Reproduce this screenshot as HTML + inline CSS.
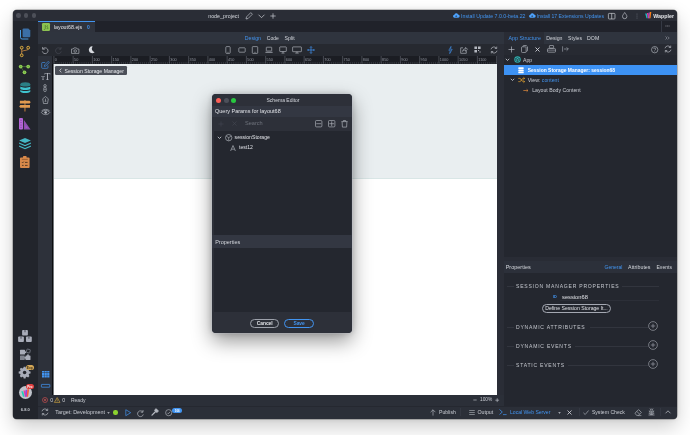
<!DOCTYPE html>
<html lang="en"><head><meta charset="utf-8"><title>Wappler - Schema Editor</title>
<style>
html,body{margin:0;padding:0;background:#fff;}
body{width:690px;height:435px;overflow:hidden;position:relative;font-family:"Liberation Sans",sans-serif;}
#win,#dlg{position:absolute;overflow:hidden;will-change:transform;}
#win{background:#22252d;border-radius:4px;}
#dlg{background:#2d3039;border-radius:4px;}
#winsh,#dlgsh{position:absolute;}
#win div,#win svg,#win span.t,#dlg div,#dlg svg,#dlg span.t{position:absolute;}
span.t{white-space:nowrap;line-height:8px;height:8px;}
svg{overflow:visible;display:block;}
</style></head>
<body>
<div id="winsh" style="left:13px;top:10px;width:664px;height:409px;border-radius:4px;box-shadow:0 0 0 .5px rgba(0,0,0,.4),0 8px 20px rgba(0,0,0,.2),0 0 5px rgba(0,0,0,.1)"></div>
<div id="win" style="left:13px;top:10px;width:664px;height:409px;">
<div style="left:0px;top:0px;width:665px;height:11px;background:#2a2d36;"></div>
<div style="left:24.5px;top:11px;width:640px;height:11px;background:#20222a;"></div>
<div style="left:24.5px;top:11px;width:57.5px;height:11px;background:#2f333d;"></div>
<div style="left:24.5px;top:11px;width:57.5px;height:0.9px;background:#4294f0;"></div>
<div style="left:24.5px;top:22px;width:640px;height:11.6px;background:#2f343e;"></div>
<div style="left:24.5px;top:33.6px;width:466px;height:12.4px;background:#262930;"></div>
<div style="left:39px;top:46px;width:445px;height:7.5px;background:#1b1d23;"></div>
<div style="left:24.5px;top:46px;width:14.5px;height:339px;background:#2d313a;"></div>
<div style="left:39px;top:53.5px;width:445px;height:331.5px;background:#0c0d10;"></div>
<div style="left:40px;top:54px;width:1px;height:331px;background:#74787c;"></div>
<div style="left:40.6px;top:53.5px;width:443.4px;height:114.6px;background:#e9eef0;"></div>
<div style="left:40.6px;top:167.9px;width:443.4px;height:0.8px;background:#d9e6e6;"></div>
<div style="left:40.6px;top:168.7px;width:443.4px;height:216.3px;background:#ffffff;"></div>
<div style="left:484px;top:33.6px;width:7px;height:351.4px;background:#2a2d36;"></div>
<div style="left:24.5px;top:385px;width:640px;height:10.7px;background:#2b2f38;"></div>
<div style="left:24.5px;top:395.7px;width:640px;height:13.3px;background:#2b2f38;"></div>
<div style="left:24.5px;top:395.5px;width:640px;height:0.5px;background:#252830;"></div>
<div style="left:0px;top:11px;width:24.5px;height:398px;background:#22252c;"></div>
<div style="left:491px;top:22px;width:174px;height:12px;background:#2f343e;"></div>
<div style="left:491px;top:22px;width:40px;height:12px;background:#292c35;"></div>
<div style="left:491px;top:34px;width:174px;height:11px;background:#272a32;"></div>
<div style="left:491px;top:44.8px;width:173.5px;height:206px;background:#24272f;"></div>
<div style="left:491px;top:55.1px;width:173.5px;height:10.1px;background:#3d92f4;"></div>
<div style="left:491px;top:247px;width:174px;height:4px;background:#292c35;"></div>
<div style="left:491px;top:250.8px;width:173.5px;height:12.3px;background:#2c303a;"></div>
<div style="left:491px;top:263.1px;width:173.5px;height:132.6px;background:#24272f;"></div>
<div style="left:3.05px;top:3.45px;width:4.5px;height:4.5px;background:#4d5059;border-radius:50%"></div>
<div style="left:10.85px;top:3.45px;width:4.5px;height:4.5px;background:#4d5059;border-radius:50%"></div>
<div style="left:18.65px;top:3.45px;width:4.5px;height:4.5px;background:#4d5059;border-radius:50%"></div>
<span class="t" style="left:195.2px;top:1.70px;color:#d4d7dd;font-size:5.33px;font-weight:400;">node_project</span>
<svg style="left:232.20px;top:1.60px;" width="8" height="8" viewBox="0 0 8 8"><path d="M1 7l.5-2.100L5.800.6l1.600 1.600L3.100 6.500z" fill="none" stroke="#c9ccd3" stroke-width=".65"/></svg>
<svg style="left:244.80px;top:3.80px;" width="7" height="4.4" viewBox="0 0 7 4.4"><path d="M.5.700L3.500 3.700 6.500.7" fill="none" stroke="#c9ccd3" stroke-width=".75"/></svg>
<svg style="left:257.40px;top:2.70px;" width="6" height="6" viewBox="0 0 6 6"><path d="M3 .3v5.4M.3 3h5.4" stroke="#c9ccd3" stroke-width=".7"/></svg>
<svg style="left:440.10px;top:3.10px;" width="6.4" height="5.2" viewBox="0 0 6.600 5.400"><path d="M1.600 4.900a1.500 1.500 0 0 1-.2-3A2 2 0 0 1 5.200 1.500 1.700 1.700 0 0 1 5.300 4.900z" fill="#4da3ff"/><path d="M3.300 2.100v1.900M2.500 3.300l.8.800.8-.8" stroke="#2a2d36" stroke-width=".55" fill="none"/></svg>
<span class="t" style="left:448px;top:1.70px;color:#4294f0;font-size:5.26px;font-weight:400;">Install Update 7.0.0-beta.22</span>
<svg style="left:515.50px;top:3.10px;" width="6.4" height="5.2" viewBox="0 0 6.600 5.400"><path d="M1.600 4.900a1.500 1.500 0 0 1-.2-3A2 2 0 0 1 5.200 1.500 1.700 1.700 0 0 1 5.300 4.900z" fill="#4da3ff"/><path d="M3.300 2.100v1.900M2.500 3.300l.8.800.8-.8" stroke="#2a2d36" stroke-width=".55" fill="none"/></svg>
<span class="t" style="left:523.7px;top:1.70px;color:#4294f0;font-size:5.11px;font-weight:400;">Install 17 Extensions Updates</span>
<svg style="left:594.90px;top:2.50px;" width="7.4" height="6.4" viewBox="0 0 7.4 6.4"><rect x=".4" y=".4" width="6.6" height="5.6" rx=".8" fill="none" stroke="#c9ccd3" stroke-width=".7"/><path d="M3.7.4v5.6" stroke="#c9ccd3" stroke-width=".7"/></svg>
<svg style="left:608.80px;top:2.20px;" width="5.4" height="7" viewBox="0 0 5.4 7"><path d="M2.7.5C3.6 2 4.9 3.1 4.9 4.5a2.2 2.2 0 0 1-4.4 0C.5 3.1 1.8 2 2.7.5z" fill="none" stroke="#c9ccd3" stroke-width=".65"/></svg>
<svg style="left:623.00px;top:2.70px;" width="2" height="6" viewBox="0 0 2 6"><circle cx="1" cy="1" r=".5" fill="#6a6e78"/><circle cx="1" cy="3" r=".5" fill="#6a6e78"/><circle cx="1" cy="5" r=".5" fill="#6a6e78"/></svg>
<svg style="left:632.40px;top:2.30px;" width="6.4" height="6.4" viewBox="0 0 6.4 6.4"><path d="M.2 1.6h1.5l1 4.6h-1.2z" fill="#19c1c8"/><path d="M1.9 1h1.5l.9 5.2H2.9z" fill="#e83e8c"/><path d="M3.6.4h1.3L4.6 6.2H3.3z" fill="#8d46e7"/><path d="M4.9.1h1.4L5.5 6.2H4.3z" fill="#fd7e14"/></svg>
<span class="t" style="left:640.3px;top:1.70px;color:#e4e6ea;font-size:5.3px;font-weight:700;">Wappler</span>
<div style="left:29px;top:13px;width:8px;height:8px;background:#8cc152;border-radius:1.2px"></div>
<svg style="left:29.00px;top:13.00px;" width="8" height="8" viewBox="0 0 8 8"><path d="M3.300 2v3.400c0 .9-.5 1.300-1.400 1.100M6 2.800c-1.100-.4-1.800 1.100-.5 1.500 1.200.4.700 1.900-.8 1.300" fill="none" stroke="#4f7d2a" stroke-width=".8"/></svg>
<span class="t" style="left:40.9px;top:13.10px;color:#e0e2e7;font-size:5.3px;font-weight:400;">layout68.ejs</span>
<span class="t" style="left:75.3px;top:13.10px;color:#4294f0;font-size:5px;font-weight:700;transform:translateX(-50%);">0</span>
<div style="left:647.5px;top:11px;width:0.5px;height:11px;background:#353944;"></div>
<svg style="left:652.20px;top:15.30px;" width="5" height="2" viewBox="0 0 5 2"><path d="M.3 1h4.4" stroke="#b0b4bc" stroke-width=".55" stroke-dasharray="1.2 .4"/></svg>
<span class="t" style="left:231.8px;top:23.90px;color:#4294f0;font-size:5.2px;font-weight:400;">Design</span>
<span class="t" style="left:253.8px;top:23.90px;color:#d4d7dd;font-size:5.0px;font-weight:400;">Code</span>
<span class="t" style="left:271.5px;top:23.90px;color:#d4d7dd;font-size:5.2px;font-weight:400;">Split</span>
<svg style="left:28.20px;top:36.00px;" width="7.6" height="7.6" viewBox="0 0 7.6 7.6"><path d="M1.6 1v2.2h2.2" fill="none" stroke="#b4b8c0" stroke-width=".7"/><path d="M1.8 3A2.9 2.9 0 1 1 1.3 5.400" fill="none" stroke="#b4b8c0" stroke-width=".7"/></svg>
<svg style="left:41.90px;top:36.00px;" width="7.6" height="7.6" viewBox="0 0 7.6 7.6"><path d="M6 1v2.2H3.800" fill="none" stroke="#454852" stroke-width=".7"/><path d="M5.800 3A2.900 2.900 0 1 0 6.300 5.400" fill="none" stroke="#454852" stroke-width=".7"/></svg>
<svg style="left:57.70px;top:36.50px;" width="8.4" height="7" viewBox="0 0 8.4 7"><path d="M.5 2h1.700l.7-1.100h2.600l.7 1.100h1.700v4.400H.5z" fill="none" stroke="#b4b8c0" stroke-width=".65"/><circle cx="4.200" cy="4" r="1.300" fill="none" stroke="#b4b8c0" stroke-width=".65"/></svg>
<svg style="left:75.10px;top:36.10px;" width="7" height="7.4" viewBox="0 0 7 7.4"><path d="M4.600.4A3.400 3.400 0 1 0 6.600 6.200 3.600 3.600 0 0 1 4.600.4z" fill="#d8dbe1"/></svg>
<svg style="left:211.40px;top:35.80px;" width="8" height="8" viewBox="0 0 8 8"><rect x="1.800" y=".6" width="4.400" height="6.800" rx=".9" fill="none" stroke="#b4b8c0" stroke-width=".65"/><path d="M3.400 6.300h1.200" stroke="#b4b8c0" stroke-width=".5"/></svg>
<svg style="left:224.50px;top:35.80px;" width="8" height="8" viewBox="0 0 8 8"><rect x=".8" y="1.800" width="6.400" height="4.400" rx=".7" fill="none" stroke="#b4b8c0" stroke-width=".65"/></svg>
<svg style="left:237.70px;top:35.80px;" width="8" height="8" viewBox="0 0 8 8"><rect x="1.300" y=".6" width="5.400" height="6.800" rx=".7" fill="none" stroke="#b4b8c0" stroke-width=".65"/><path d="M3.300 6.300h1.400" stroke="#b4b8c0" stroke-width=".5"/></svg>
<svg style="left:251.60px;top:35.80px;" width="8" height="8" viewBox="0 0 8 8"><rect x="1.300" y="1.200" width="5.400" height="3.800" rx=".4" fill="none" stroke="#b4b8c0" stroke-width=".65"/><path d="M.4 6.300h7.200" stroke="#b4b8c0" stroke-width=".8"/></svg>
<svg style="left:265.80px;top:35.80px;" width="8" height="8" viewBox="0 0 8 8"><rect x=".7" y=".9" width="6.600" height="4.600" rx=".4" fill="none" stroke="#b4b8c0" stroke-width=".65"/><path d="M4 5.500v1.500M2.500 7.100h3" stroke="#b4b8c0" stroke-width=".65"/></svg>
<svg style="left:280.20px;top:35.80px;" width="8" height="8" viewBox="0 0 8 8"><rect x="-.4" y=".9" width="8.800" height="4.800" rx=".4" fill="none" stroke="#b4b8c0" stroke-width=".65"/><path d="M4 5.700v1.300M2.300 7.100h3.400" stroke="#b4b8c0" stroke-width=".65"/></svg>
<svg style="left:294.10px;top:35.80px;" width="8" height="8" viewBox="0 0 8 8"><path d="M4 .6v6.800M.6 4h6.800M3 1.600l1-1 1 1M3 6.400l1 1 1-1M1.600 3l-1 1 1 1M6.400 3l1 1-1 1" fill="none" stroke="#4294f0" stroke-width=".7"/></svg>
<svg style="left:435.20px;top:35.80px;" width="5" height="8" viewBox="0 0 5 8"><path d="M3 .4L.8 4.300h1.500L1.700 7.600 4.200 3.400H2.600z" fill="none" stroke="#4294f0" stroke-width=".6"/></svg>
<svg style="left:447.10px;top:35.90px;" width="8" height="8" viewBox="0 0 8 8"><path d="M3 1.800H.7v5.500h5.600V5" fill="none" stroke="#b4b8c0" stroke-width=".65"/><path d="M2.600 5.400c.2-1.700 1.200-2.700 3-2.700V1.400l1.900 1.900-1.900 1.900V4c-1.300 0-2.200.4-3 1.400z" fill="none" stroke="#b4b8c0" stroke-width=".65"/></svg>
<svg style="left:461.00px;top:36.10px;" width="7" height="7" viewBox="0 0 7 7"><path d="M.4.4h2.600v2.600H.4zM4 .4h2.600v2.600H4zM.4 4h2.600v2.600H.4zM4 4h1.100v1.100H4zM5.500 5.500h1.100v1.100H5.500z" fill="#b4b8c0"/></svg>
<svg style="left:477.20px;top:35.80px;" width="8" height="8" viewBox="0 0 8 8"><path d="M1 3.300A3 3 0 0 1 6.400 2.200M7 4.700A3 3 0 0 1 1.600 5.800" fill="none" stroke="#b4b8c0" stroke-width=".7"/><path d="M6.700.6v1.900H4.800M1.300 7.400V5.500h1.900" fill="none" stroke="#b4b8c0" stroke-width=".7"/></svg>
<svg style="left:39px;top:46px;overflow:hidden" width="445" height="7.500" viewBox="0 0 445 7.500" font-family="Liberation Sans, sans-serif"><path d="M1.90 0v7.5" stroke="#7c808a" stroke-width=".45"/><text x="2.80" y="5.100" font-size="3.800" fill="#90949e">0</text><path d="M21.15 0v7.5" stroke="#7c808a" stroke-width=".45"/><text x="22.05" y="5.100" font-size="3.800" fill="#90949e">50</text><path d="M40.40 0v7.5" stroke="#7c808a" stroke-width=".45"/><text x="41.30" y="5.100" font-size="3.800" fill="#90949e">100</text><path d="M59.65 0v7.5" stroke="#7c808a" stroke-width=".45"/><text x="60.55" y="5.100" font-size="3.800" fill="#90949e">150</text><path d="M78.90 0v7.5" stroke="#7c808a" stroke-width=".45"/><text x="79.80" y="5.100" font-size="3.800" fill="#90949e">200</text><path d="M98.15 0v7.5" stroke="#7c808a" stroke-width=".45"/><text x="99.05" y="5.100" font-size="3.800" fill="#90949e">250</text><path d="M117.40 0v7.5" stroke="#7c808a" stroke-width=".45"/><text x="118.30" y="5.100" font-size="3.800" fill="#90949e">300</text><path d="M136.65 0v7.5" stroke="#7c808a" stroke-width=".45"/><text x="137.55" y="5.100" font-size="3.800" fill="#90949e">350</text><path d="M155.90 0v7.5" stroke="#7c808a" stroke-width=".45"/><text x="156.80" y="5.100" font-size="3.800" fill="#90949e">400</text><path d="M175.15 0v7.5" stroke="#7c808a" stroke-width=".45"/><text x="176.05" y="5.100" font-size="3.800" fill="#90949e">450</text><path d="M194.40 0v7.5" stroke="#7c808a" stroke-width=".45"/><text x="195.30" y="5.100" font-size="3.800" fill="#90949e">500</text><path d="M213.65 0v7.5" stroke="#7c808a" stroke-width=".45"/><text x="214.55" y="5.100" font-size="3.800" fill="#90949e">550</text><path d="M232.90 0v7.5" stroke="#7c808a" stroke-width=".45"/><text x="233.80" y="5.100" font-size="3.800" fill="#90949e">600</text><path d="M252.15 0v7.5" stroke="#7c808a" stroke-width=".45"/><text x="253.05" y="5.100" font-size="3.800" fill="#90949e">650</text><path d="M271.40 0v7.5" stroke="#7c808a" stroke-width=".45"/><text x="272.30" y="5.100" font-size="3.800" fill="#90949e">700</text><path d="M290.65 0v7.5" stroke="#7c808a" stroke-width=".45"/><text x="291.55" y="5.100" font-size="3.800" fill="#90949e">750</text><path d="M309.90 0v7.5" stroke="#7c808a" stroke-width=".45"/><text x="310.80" y="5.100" font-size="3.800" fill="#90949e">800</text><path d="M329.15 0v7.5" stroke="#7c808a" stroke-width=".45"/><text x="330.05" y="5.100" font-size="3.800" fill="#90949e">850</text><path d="M348.40 0v7.5" stroke="#7c808a" stroke-width=".45"/><text x="349.30" y="5.100" font-size="3.800" fill="#90949e">900</text><path d="M367.65 0v7.5" stroke="#7c808a" stroke-width=".45"/><text x="368.55" y="5.100" font-size="3.800" fill="#90949e">950</text><path d="M386.90 0v7.5" stroke="#7c808a" stroke-width=".45"/><text x="387.80" y="5.100" font-size="3.800" fill="#90949e">1000</text><path d="M406.15 0v7.5" stroke="#7c808a" stroke-width=".45"/><text x="407.05" y="5.100" font-size="3.800" fill="#90949e">1050</text><path d="M425.40 0v7.5" stroke="#7c808a" stroke-width=".45"/><text x="426.30" y="5.100" font-size="3.800" fill="#90949e">1100</text><path d="M444.65 0v7.5" stroke="#7c808a" stroke-width=".45"/><text x="445.55" y="5.100" font-size="3.800" fill="#90949e">1150</text><path d="M1.900 7h445" stroke="#7c808a" stroke-width="1" stroke-dasharray=".45 1.475"/></svg>
<svg style="left:27.60px;top:50.70px;" width="9" height="8" viewBox="0 0 9 8"><path d="M4.200 1.500H1.400a.7.700 0 0 0-.7.700v4.400a.7.700 0 0 0 .7.700h4.800a.7.700 0 0 0 .7-.7V4.400" fill="none" stroke="#4294f0" stroke-width=".65"/><path d="M3.300 5.400l.3-1.400L7.200.4l1.100 1.100-3.600 3.600z" fill="none" stroke="#4294f0" stroke-width=".65"/></svg>
<span class="t" style="left:27.9px;top:60.2px;color:#b4b8c0;font-family:'Liberation Serif',serif;line-height:10px;height:10px;letter-spacing:-.35px"><span style="font-size:6.600px">T</span><span style="font-size:9.600px">T</span></span>
<svg style="left:30.40px;top:74.40px;" width="4" height="8" viewBox="0 0 4 8"><circle cx="2" cy="1.800" r="1.250" fill="none" stroke="#b4b8c0" stroke-width=".65"/><rect x=".8" y="3.200" width="2.400" height="4.300" rx=".9" fill="none" stroke="#b4b8c0" stroke-width=".65"/><path d="M.8 5.300h2.400" stroke="#b4b8c0" stroke-width=".5"/></svg>
<svg style="left:28.90px;top:86.10px;" width="7" height="8" viewBox="0 0 7 8"><path d="M3.500.5L6.300 2.800 5.500 7.500H1.500L.7 2.800z" fill="none" stroke="#b4b8c0" stroke-width=".65"/><path d="M3.500 2.600v2.600M2.600 5.300h1.800" stroke="#b4b8c0" stroke-width=".6"/></svg>
<svg style="left:27.90px;top:98.80px;" width="9.2" height="6.4" viewBox="0 0 9.2 6.4"><path d="M.4 3.600C2.400.7 6.800.7 8.800 3.600 6.800 6.300 2.400 6.300.4 3.600z" fill="none" stroke="#b4b8c0" stroke-width=".65"/><circle cx="4.600" cy="3.500" r="1.300" fill="#b4b8c0"/><path d="M.6 1.800C2.600-.1 6.600-.1 8.600 1.800" fill="none" stroke="#b4b8c0" stroke-width=".65"/></svg>
<svg style="left:28.95px;top:360.50px;" width="7.4" height="6.6" viewBox="0 0 7.4 6.6"><path d="M0 0h2.200v1.300H0zM2.600 0h2.200v1.300H2.600zM5.200 0h2.200v1.300H5.200zM0 1.700h2.200v2.200H0zM2.600 1.700h2.200v2.200H2.600zM5.200 1.700h2.200v2.200H5.200zM0 4.300h2.200v2.200H0zM2.600 4.300h2.200v2.200H2.600zM5.200 4.300h2.200v2.200H5.200z" fill="#4294f0"/></svg>
<svg style="left:28.00px;top:374.05px;" width="9.2" height="3.6" viewBox="0 0 9.2 3.6"><rect x=".4" y=".4" width="8.400" height="2.800" rx=".3" fill="none" stroke="#4294f0" stroke-width=".75"/></svg>
<div style="left:42.1px;top:56.3px;width:72px;height:9.1px;background:#4b4f58;border-radius:1.300px"></div>
<svg style="left:45.50px;top:58.40px;" width="3" height="5" viewBox="0 0 3 5"><path d="M2.300.6L.7 2.500l1.600 1.900" fill="none" stroke="#e8eaee" stroke-width=".7"/></svg>
<span class="t" style="left:51.5px;top:56.90px;color:#e8eaee;font-size:5.15px;font-weight:400;">Session Storage Manager</span>
<svg style="left:6.70px;top:17.60px;" width="11" height="12" viewBox="0 0 11 12"><path d="M.5 2.400v7a1.600 1.600 0 0 0 1.600 1.600h5.900" fill="none" stroke="#4aa0ea" stroke-width=".95" stroke-linecap="round"/><path d="M3.700.5h4.600l2 2v5.700a1.100 1.100 0 0 1-1.100 1.100H3.700a1.100 1.100 0 0 1-1.100-1.100V1.600A1.100 1.100 0 0 1 3.700.5z" fill="#3b6fa6"/></svg>
<svg style="left:7.00px;top:36.10px;" width="10" height="11" viewBox="0 0 10 11"><path d="M1.700 1.700v7.600M8.200 1.700v1.300c0 1.800-6.500 1-6.500 3" fill="none" stroke="#b9803f" stroke-width=".9"/><circle cx="1.700" cy="1.700" r="1.400" fill="#3a2f20" stroke="#e8b84a" stroke-width=".9"/><circle cx="8.200" cy="1.700" r="1.400" fill="#3a2f20" stroke="#e8b84a" stroke-width=".9"/><circle cx="1.700" cy="9.300" r="1.400" fill="#3a2f20" stroke="#e8b84a" stroke-width=".9"/></svg>
<svg style="left:6.40px;top:54.90px;" width="11" height="9" viewBox="0 0 11 9"><path d="M1.700 1.600h7.500M1.700 1.600l3.700 5.700" stroke="#4e7a35" stroke-width=".8"/><circle cx="1.700" cy="1.600" r="1.850" fill="#8fcf55"/><circle cx="9.200" cy="1.600" r="1.850" fill="#8fcf55"/><circle cx="5.500" cy="7.300" r="1.850" fill="#8fcf55"/><circle cx="1.700" cy="1.600" r=".75" fill="#6aa840"/><circle cx="9.200" cy="1.600" r=".75" fill="#6aa840"/><circle cx="5.500" cy="7.300" r=".75" fill="#6aa840"/></svg>
<svg style="left:6.90px;top:72.10px;" width="10.6" height="11.4" viewBox="0 0 10.6 11.4"><path d="M.3 2.300C.3 1.100 2.500.3 5.300.3s5 .8 5 2v1.200c-1.200 1.500-8.800 1.500-10 0z" fill="#2b7f85"/><path d="M.3 4.600c1.400 1.500 8.600 1.500 10 0v2.300c-1.400 1.500-8.600 1.500-10 0zM.3 8c1.400 1.500 8.600 1.500 10 0v1.700c-1.400 1.900-8.600 1.900-10 0z" fill="#3fc3cf"/></svg>
<svg style="left:6.10px;top:90.00px;" width="12" height="11.4" viewBox="0 0 12 11.4"><path d="M5.400 0h1.100v11.400H5.400z" fill="#b87a3a"/><path d="M.9.800h9.700l1.100 1.400-1.100 1.400H.9zM11 5H1.300L.2 6.400l1.100 1.400H11z" fill="#e09a50"/></svg>
<svg style="left:6.30px;top:108.20px;" width="11.6" height="11.6" viewBox="0 0 11.6 11.6"><rect x="0" y=".1" width="4" height="11.500" rx="1" fill="#b565d8"/><circle cx="2" cy="2.300" r=".5" fill="#6a3a86"/><circle cx="2" cy="4.600" r=".5" fill="#6a3a86"/><circle cx="2" cy="6.900" r=".5" fill="#6a3a86"/><circle cx="2" cy="9.200" r=".5" fill="#6a3a86"/><path d="M4.900 11.600V2l6.700 9.600z" fill="#8e4fb0"/><path d="M6.500 10V6.800L8.700 10z" fill="#b565d8" opacity=".55"/></svg>
<svg style="left:5.95px;top:127.70px;" width="12" height="11.2" viewBox="0 0 12 11.2"><path d="M6 .1l5.900 2.500L6 5.100.1 2.600z" fill="#45b8c4"/><path d="M.1 5.300L6 7.800l5.900-2.500v1.300L6 9.100.1 6.600zM.1 8.300L6 10.800l5.900-2.500v1.300L6 12.100.1 9.600z" fill="#45b8c4" transform="translate(0,-.9)"/></svg>
<svg style="left:7.15px;top:145.70px;" width="9.6" height="12" viewBox="0 0 9.6 12"><rect x="0" y="1.400" width="9.600" height="10.600" rx="1" fill="#d8894a"/><rect x="3" y="0" width="3.600" height="2.600" rx=".7" fill="#d8894a"/><path d="M1.800 3.400h6" stroke="#8a5428" stroke-width=".7"/><path d="M2 6.200l.7.700 1.100-1.300M5 6.400h2.600M2 9.400h1.600M5 9.400h2.600" stroke="#3a2a1c" stroke-width=".8" fill="none"/></svg>
<svg style="left:4.95px;top:320.05px;" width="14" height="12.1" viewBox="0 0 14 12.1"><rect x="4.1" y="0.1" width="5.800" height="5.300" rx=".9" fill="#a8acb8"/><path d="M6.3999999999999995 0.1v2.200h1.200V0.1" fill="#5c606b"/><rect x="0.1" y="6.6" width="5.800" height="5.300" rx=".9" fill="#a8acb8"/><path d="M2.4 6.6v2.200h1.200V6.6" fill="#5c606b"/><rect x="8" y="6.6" width="5.800" height="5.300" rx=".9" fill="#a8acb8"/><path d="M10.3 6.6v2.200h1.200V6.6" fill="#5c606b"/></svg>
<svg style="left:6.90px;top:338.80px;" width="10.6" height="11.4" viewBox="0 0 10.6 11.4"><rect x="0" y=".8" width="5" height="4.800" rx=".6" fill="#a8acb8"/><circle cx="5.200" cy="3.200" r=".95" fill="#a8acb8"/><rect x="0" y="6.500" width="4.700" height="4.500" rx=".6" fill="#7f838e"/><rect x="5.500" y="6.500" width="5" height="4.500" rx=".6" fill="#a8acb8"/><circle cx="5.300" cy="8.700" r=".95" fill="#a8acb8"/><circle cx="8" cy="6.300" r=".95" fill="#a8acb8"/><rect x="6.600" y=".3" width="3.500" height="3.500" rx=".6" fill="none" stroke="#6e727d" stroke-width=".9" transform="rotate(12 8.300 2)"/></svg>
<svg style="left:5.90px;top:357.30px;" width="11.4" height="11.4" viewBox="0 0 11.4 11.4"><path d="M4.700.2h2l.35 1.500 1 .45 1.350-.8L10.800 2.750l-.8 1.350.45 1 1.500.35v2l-1.500.35-.45 1 .8 1.350L9.400 11.550l-1.350-.8-1 .45L6.700 12.700h-2l-.35-1.500-1-.45-1.350.8L.6 10.150l.8-1.350-.45-1L-.55 7.450v-2l1.500-.35.45-1-.8-1.350L2 1.350l1.350.8 1-.45z" fill="#a8acb8" transform="translate(.2,-.55) scale(.95)"/><circle cx="5.600" cy="5.600" r="1.750" fill="#22252c"/></svg>
<div style="left:13px;top:355px;width:7.6px;height:5.4px;background:#d4a857;border-radius:2.700px"></div>
<span class="t" style="left:16.8px;top:353.80px;color:#3a2f1c;font-size:3.2px;font-weight:700;transform:translateX(-50%);">Exp</span>
<div style="left:5.5px;top:375.7px;width:13.8px;height:13.8px;background:#bfc3cb;border-radius:50%"></div>
<svg style="left:8.00px;top:378.80px;" width="8.6" height="8" viewBox="0 0 8.6 8"><path d="M.3 2.200h1.900l1.400 5.600H2z" fill="#1fd0b8"/><path d="M2.500 1.400h1.900l1.100 6.400H3.800z" fill="#e83ea0"/><path d="M4.600.8h1.700l-.5 7H4.300z" fill="#8d46e7"/><path d="M6.300.3h1.900L7.100 7.800H5.600z" fill="#fb5a3c"/></svg>
<div style="left:13px;top:374px;width:7.6px;height:5.4px;background:#e04040;border-radius:2.700px"></div>
<span class="t" style="left:16.8px;top:372.80px;color:#fff;font-size:3.2px;font-weight:700;transform:translateX(-50%);">Pro</span>
<span class="t" style="left:12.3px;top:395.90px;color:#c9ccd3;font-size:4px;font-weight:700;transform:translateX(-50%);">6.8.0</span>
<span class="t" style="left:495.5px;top:23.90px;color:#4294f0;font-size:5.3px;font-weight:400;">App Structure</span>
<span class="t" style="left:533.3px;top:23.90px;color:#d4d7dd;font-size:5.2px;font-weight:400;">Design</span>
<span class="t" style="left:555.1px;top:23.90px;color:#d4d7dd;font-size:5.1px;font-weight:400;">Styles</span>
<span class="t" style="left:574.1px;top:23.90px;color:#d4d7dd;font-size:5.2px;font-weight:400;">DOM</span>
<svg style="left:651.50px;top:25.90px;" width="5" height="4" viewBox="0 0 5 4"><path d="M.5.500L2 2 .5 3.500M2.700.5L4.200 2 2.700 3.500" fill="none" stroke="#9a9ea8" stroke-width=".6"/></svg>
<svg style="left:495.30px;top:35.70px;" width="7" height="7" viewBox="0 0 7 7"><path d="M3.500.5v6M.5 3.500h6" stroke="#b4b8c0" stroke-width=".7"/></svg>
<svg style="left:508.00px;top:35.20px;" width="7" height="8" viewBox="0 0 7 8"><rect x=".5" y="1.800" width="4.600" height="5.700" rx=".8" fill="none" stroke="#b4b8c0" stroke-width=".65"/><path d="M2 1.800V1.300a.8.800 0 0 1 .8-.8h2.400l1.300 1.300v3.600a.8.800 0 0 1-.8.800H5.100" fill="none" stroke="#b4b8c0" stroke-width=".65"/></svg>
<svg style="left:522.30px;top:36.70px;" width="5" height="5" viewBox="0 0 5 5"><path d="M.5.500l4 4M4.500.5l-4 4" stroke="#d0d3da" stroke-width=".9"/></svg>
<svg style="left:534.30px;top:35.20px;" width="9" height="8" viewBox="0 0 9 8"><rect x="2.400" y=".5" width="4.200" height="2.600" rx=".5" fill="none" stroke="#b4b8c0" stroke-width=".65"/><rect x=".5" y="3.600" width="8" height="3.600" rx=".7" fill="none" stroke="#b4b8c0" stroke-width=".65"/><path d="M.5 5.200h8" stroke="#b4b8c0" stroke-width=".5"/></svg>
<svg style="left:549.40px;top:36.20px;" width="7" height="6" viewBox="0 0 7 6"><path d="M.6.300v5.400M2 3h4.300M4.600 1.300L6.300 3 4.600 4.700" fill="none" stroke="#9a9ea8" stroke-width=".7"/></svg>
<svg style="left:638.10px;top:35.50px;" width="7.4" height="7.4" viewBox="0 0 7.4 7.4"><circle cx="3.700" cy="3.700" r="3.200" fill="none" stroke="#b4b8c0" stroke-width=".65"/><path d="M2.700 2.900a1 1 0 1 1 1.400 1c-.3.200-.4.400-.4.700" fill="none" stroke="#b4b8c0" stroke-width=".65"/><circle cx="3.700" cy="5.500" r=".35" fill="#b4b8c0"/></svg>
<svg style="left:651.00px;top:35.20px;" width="8" height="8" viewBox="0 0 8 8"><path d="M1 3.300A3 3 0 0 1 6.400 2.200M7 4.700A3 3 0 0 1 1.600 5.800" fill="none" stroke="#b4b8c0" stroke-width=".7"/><path d="M6.700.6v1.900H4.800M1.300 7.400V5.500h1.900" fill="none" stroke="#b4b8c0" stroke-width=".7"/></svg>
<svg style="left:492.00px;top:48.30px;" width="5" height="3.4" viewBox="0 0 5 3.4"><path d="M.8.800L2.500 2.500 4.200.8" fill="none" stroke="#c9ccd3" stroke-width=".85"/></svg>
<svg style="left:500.50px;top:46.30px;" width="7" height="7" viewBox="0 0 7 7"><circle cx="3.500" cy="3.500" r="3.200" fill="#2fb5b5"/><path d="M1.600 2.500l1.900-1 1.900 1v2.200l-1.900 1-1.900-1zM1.600 2.500l1.900 1 1.900-1M3.500 3.500v2.200" fill="none" stroke="#22252d" stroke-width=".55"/></svg>
<span class="t" style="left:510px;top:46.00px;color:#c9ccd3;font-size:5.2px;font-weight:400;">App</span>
<svg style="left:505.30px;top:56.90px;" width="6" height="6.6" viewBox="0 0 6 6.6"><rect x=".3" y=".3" width="5.400" height="1.700" rx=".5" fill="#fff"/><rect x=".3" y="2.450" width="5.400" height="1.700" rx=".5" fill="#fff"/><rect x=".3" y="4.600" width="5.400" height="1.700" rx=".5" fill="#fff"/></svg>
<span class="t" style="left:514.8px;top:56.70px;color:#ffffff;font-size:4.95px;font-weight:700;">Session Storage Manager: session68</span>
<svg style="left:496.80px;top:68.30px;" width="5" height="3.4" viewBox="0 0 5 3.4"><path d="M.8.800L2.500 2.500 4.200.8" fill="none" stroke="#c9ccd3" stroke-width=".85"/></svg>
<svg style="left:504.80px;top:67.00px;" width="7" height="6" viewBox="0 0 7 6"><path d="M.3 1.400h1.500c1.600 0 1.800 3.200 3.400 3.200h1.300M.3 4.600h1.500c1.600 0 1.800-3.200 3.400-3.200h1.300M5.500.3l1.200 1.100-1.200 1.100M5.500 3.500l1.200 1.100-1.200 1.100" fill="none" stroke="#e0a030" stroke-width=".75"/></svg>
<span class="t" style="left:514.8px;top:66px;color:#c9ccd3;font-size:5.2px">View: <span style="color:#4294f0">content</span></span>
<svg style="left:510.30px;top:78.50px;" width="6" height="3" viewBox="0 0 6 3"><path d="M.3 1.500h4.600M3.600.3l1.400 1.200-1.400 1.200" fill="none" stroke="#e08a3c" stroke-width=".7"/></svg>
<span class="t" style="left:519.2px;top:76.00px;color:#c9ccd3;font-size:5.2px;font-weight:400;">Layout Body Content</span>
<span class="t" style="left:492.7px;top:253.30px;color:#d4d7dd;font-size:5.5px;font-weight:400;">Properties</span>
<span class="t" style="left:591.5px;top:253.30px;color:#4294f0;font-size:5.05px;font-weight:400;">General</span>
<span class="t" style="left:615.1px;top:253.30px;color:#d4d7dd;font-size:5.3px;font-weight:400;">Attributes</span>
<span class="t" style="left:643.5px;top:253.30px;color:#d4d7dd;font-size:5.05px;font-weight:400;">Events</span>
<div style="left:494px;top:276.0px;width:7px;height:0.45px;background:#32353e;"></div>
<div style="left:609px;top:276.0px;width:37px;height:0.45px;background:#32353e;"></div>
<span class="t" style="left:503px;top:272.20px;color:#c4c7ce;font-size:5.05px;font-weight:400;letter-spacing:.78px">SESSION MANAGER PROPERTIES</span>
<span class="t" style="left:541.9px;top:283.10px;color:#4294f0;font-size:3.8px;font-weight:700;transform:translateX(-50%);">ID</span>
<span class="t" style="left:549px;top:282.60px;color:#e0e2e7;font-size:5.75px;font-weight:400;">session68</span>
<div style="left:547px;top:290.4px;width:99px;height:0.45px;background:#2c2f38;"></div>
<div style="left:529.3px;top:293.7px;width:68.600px;height:9.400px;border:.6px solid #a4a8b2;border-radius:4.700px;box-sizing:border-box"></div>
<span class="t" style="left:563.5px;top:294.40px;color:#e0e2e7;font-size:5.15px;font-weight:400;transform:translateX(-50%);">Define Session Storage It...</span>
<div style="left:494px;top:316.6px;width:7px;height:0.45px;background:#32353e;"></div>
<div style="left:577.2px;top:316.6px;width:57.799999999999955px;height:0.45px;background:#32353e;"></div>
<span class="t" style="left:503px;top:312.80px;color:#c4c7ce;font-size:5.05px;font-weight:400;letter-spacing:.78px">DYNAMIC ATTRIBUTES</span>
<svg style="left:635.00px;top:311.20px;" width="10" height="10" viewBox="0 0 10 10"><circle cx="5" cy="5" r="4.400" fill="none" stroke="#a9adb6" stroke-width=".6"/><path d="M5 2.800v4.400M2.800 5h4.400" stroke="#a9adb6" stroke-width=".6"/></svg>
<div style="left:494px;top:335.8px;width:7px;height:0.45px;background:#32353e;"></div>
<div style="left:562.2px;top:335.8px;width:72.79999999999995px;height:0.45px;background:#32353e;"></div>
<span class="t" style="left:503px;top:332.00px;color:#c4c7ce;font-size:5.05px;font-weight:400;letter-spacing:.78px">DYNAMIC EVENTS</span>
<svg style="left:635.00px;top:330.40px;" width="10" height="10" viewBox="0 0 10 10"><circle cx="5" cy="5" r="4.400" fill="none" stroke="#a9adb6" stroke-width=".6"/><path d="M5 2.800v4.400M2.800 5h4.400" stroke="#a9adb6" stroke-width=".6"/></svg>
<div style="left:494px;top:354.8px;width:7px;height:0.45px;background:#32353e;"></div>
<div style="left:554.7px;top:354.8px;width:80.29999999999995px;height:0.45px;background:#32353e;"></div>
<span class="t" style="left:503px;top:351.00px;color:#c4c7ce;font-size:5.05px;font-weight:400;letter-spacing:.78px">STATIC EVENTS</span>
<svg style="left:635.00px;top:349.40px;" width="10" height="10" viewBox="0 0 10 10"><circle cx="5" cy="5" r="4.400" fill="none" stroke="#a9adb6" stroke-width=".6"/><path d="M5 2.800v4.400M2.800 5h4.400" stroke="#a9adb6" stroke-width=".6"/></svg>
<svg style="left:28.80px;top:387.40px;" width="6" height="6" viewBox="0 0 6 6"><circle cx="3" cy="3" r="2.500" fill="none" stroke="#e05252" stroke-width=".6"/><path d="M2 2l2 2M4 2L2 4" stroke="#e05252" stroke-width=".6"/></svg>
<span class="t" style="left:37.3px;top:386.40px;color:#c9ccd3;font-size:5.2px;font-weight:400;">0</span>
<svg style="left:41.10px;top:387.30px;" width="6.4" height="6" viewBox="0 0 6.4 6"><path d="M3.200.6L6 5.400H.4z" fill="none" stroke="#e0b040" stroke-width=".6"/><path d="M3.200 2.300v1.700M3.200 4.500v.4" stroke="#e0b040" stroke-width=".55"/></svg>
<span class="t" style="left:49.3px;top:386.40px;color:#c9ccd3;font-size:5.2px;font-weight:400;">0</span>
<span class="t" style="left:57.9px;top:386.40px;color:#c9ccd3;font-size:5.05px;font-weight:400;">Ready</span>
<svg style="left:460.30px;top:388.80px;" width="4" height="2" viewBox="0 0 4 2"><path d="M.3 1h3.400" stroke="#c9ccd3" stroke-width=".6"/></svg>
<span class="t" style="left:467px;top:385.90px;color:#c9ccd3;font-size:4.8px;font-weight:400;">100%</span>
<svg style="left:481.50px;top:387.60px;" width="4.4" height="4.4" viewBox="0 0 4.4 4.4"><path d="M2.200.3v3.800M.3 2.200h3.800" stroke="#c9ccd3" stroke-width=".6"/></svg>
<svg style="left:27.80px;top:398.40px;" width="8" height="8" viewBox="0 0 8 8"><path d="M1 3.300A3 3 0 0 1 6.400 2.200M7 4.700A3 3 0 0 1 1.600 5.800" fill="none" stroke="#b4b8c0" stroke-width=".7"/><path d="M6.700.6v1.900H4.800M1.300 7.400V5.500h1.900" fill="none" stroke="#b4b8c0" stroke-width=".7"/></svg>
<span class="t" style="left:42.2px;top:398.40px;color:#c9ccd3;font-size:5.4px;font-weight:400;">Target: Development</span>
<svg style="left:93.70px;top:401.60px;" width="3" height="2" viewBox="0 0 3 2"><path d="M.2.300h2.600L1.500 1.800z" fill="#c9ccd3"/></svg>
<div style="left:100.3px;top:400.2px;width:4.4px;height:4.4px;background:#8bd22f;border-radius:50%"></div>
<svg style="left:111.70px;top:398.70px;" width="6.4" height="7.4" viewBox="0 0 6.4 7.4"><path d="M.8.700L5.700 3.700.8 6.700z" fill="none" stroke="#4294f0" stroke-width=".7" stroke-linejoin="round"/></svg>
<svg style="left:124.00px;top:398.60px;" width="7.6" height="7.6" viewBox="0 0 7.6 7.6"><path d="M6 1v2.200H3.800" fill="none" stroke="#b4b8c0" stroke-width=".7"/><path d="M5.800 3A2.900 2.900 0 1 0 6.300 5.400" fill="none" stroke="#b4b8c0" stroke-width=".7"/></svg>
<svg style="left:137.60px;top:398.40px;" width="8" height="8" viewBox="0 0 8 8"><path d="M1 7.100l3.400-3.400" stroke="#b4b8c0" stroke-width="1.300" stroke-linecap="round"/><path d="M3.300 2.200L5.100.5l2.500 2.500-1.700 1.800z" fill="#b4b8c0" stroke="#b4b8c0" stroke-width=".5" stroke-linejoin="round"/></svg>
<svg style="left:151.60px;top:398.70px;" width="7.4" height="7.4" viewBox="0 0 7.4 7.4"><circle cx="3.700" cy="3.700" r="3.100" fill="none" stroke="#b4b8c0" stroke-width=".65"/><path d="M2.300 3.800l1 1 1.800-2" fill="none" stroke="#b4b8c0" stroke-width=".65"/></svg>
<div style="left:159px;top:398.0px;width:10.4px;height:5px;background:#4294f0;border-radius:2.500px"></div>
<span class="t" style="left:164.2px;top:396.50px;color:#fff;font-size:2.9px;font-weight:700;transform:translateX(-50%);">106</span>
<svg style="left:417.00px;top:398.90px;" width="6" height="7" viewBox="0 0 6 7"><path d="M3 6.600V.8M.6 3.200L3 .8l2.400 2.400" fill="none" stroke="#b4b8c0" stroke-width=".65"/></svg>
<span class="t" style="left:426.1px;top:398.40px;color:#c9ccd3;font-size:5.1px;font-weight:400;">Publish</span>
<div style="left:447.3px;top:398.4px;width:0.4px;height:8px;background:#343842;"></div>
<svg style="left:456.10px;top:399.90px;" width="6" height="5" viewBox="0 0 6 5"><path d="M.2.500h5.600M.2 2.500h5.600M.2 4.500h5.600" stroke="#b4b8c0" stroke-width=".6"/></svg>
<span class="t" style="left:464.4px;top:398.40px;color:#c9ccd3;font-size:5.3px;font-weight:400;">Output</span>
<svg style="left:486.00px;top:399.40px;" width="8" height="6" viewBox="0 0 8 6"><path d="M.5.500L3.300 3 .5 5.500" fill="none" stroke="#4294f0" stroke-width=".75"/><path d="M4 5.600h3.600" stroke="#4294f0" stroke-width=".7"/></svg>
<span class="t" style="left:497px;top:398.40px;color:#4294f0;font-size:5.1px;font-weight:400;">Local Web Server</span>
<svg style="left:544.60px;top:401.60px;" width="3" height="2" viewBox="0 0 3 2"><path d="M.2.300h2.600L1.500 1.800z" fill="#c9ccd3"/></svg>
<svg style="left:554.20px;top:399.90px;" width="5" height="5" viewBox="0 0 5 5"><path d="M.5.500l4 4M4.500.5l-4 4" stroke="#e0e2e7" stroke-width=".75"/></svg>
<div style="left:565.7px;top:398.4px;width:0.4px;height:8px;background:#343842;"></div>
<svg style="left:569.50px;top:399.90px;" width="6" height="5" viewBox="0 0 6 5"><path d="M.4 2.800l1.800 1.700L5.600.5" fill="none" stroke="#b4b8c0" stroke-width=".65"/></svg>
<span class="t" style="left:578.9px;top:398.40px;color:#c9ccd3;font-size:5.13px;font-weight:400;">System Check</span>
<svg style="left:620.60px;top:398.90px;" width="8" height="7" viewBox="0 0 8 7"><path d="M1 4.200L4.600.6l2.800 2.800-3 3H2.600z M2.800 2.400l2.800 2.800" fill="none" stroke="#b4b8c0" stroke-width=".65"/><path d="M4 6.600h3.400" stroke="#b4b8c0" stroke-width=".6"/></svg>
<svg style="left:634.90px;top:398.40px;" width="7" height="8" viewBox="0 0 7 8"><path d="M2.200 2.600a1.300 1.500 0 0 1 2.600 0v3.800H2.200zM3.500 2.600v3.800M.5 7h6M2.200 3.800L.8 3M4.800 3.800l1.400-.8M2.200 5.200H.7M4.800 5.200h1.500M2.600 1.300L2 .5M4.400 1.300L5 .5" fill="none" stroke="#b4b8c0" stroke-width=".65"/></svg>
<div style="left:647px;top:398.4px;width:0.4px;height:8px;background:#343842;"></div>
<svg style="left:652.00px;top:400.40px;" width="6" height="4" viewBox="0 0 6 4"><path d="M.5 3.300L3 .8l2.500 2.500" fill="none" stroke="#c9ccd3" stroke-width=".7"/></svg>
</div>
<div id="dlgsh" style="left:212px;top:94px;width:140px;height:239px;border-radius:4px;box-shadow:0 0 0 .6px rgba(190,195,205,.55),0 8px 20px rgba(0,0,0,.42),0 0 6px rgba(0,0,0,.2)"></div>
<div id="dlg" style="left:212px;top:94px;width:140px;height:239px;">
<div style="left:0px;top:0px;width:140px;height:12.4px;background:#2d3039;"></div>
<div style="left:0px;top:12px;width:140px;height:11px;background:#333742;"></div>
<div style="left:0px;top:23px;width:140px;height:14px;background:#2d3039;"></div>
<div style="left:1.5px;top:36.9px;width:137.5px;height:104px;background:#24272f;"></div>
<div style="left:0px;top:140.9px;width:140px;height:13.3px;background:#333742;"></div>
<div style="left:1.5px;top:154.2px;width:137.5px;height:63.4px;background:#24272f;"></div>
<div style="left:0px;top:217.6px;width:140px;height:21.1px;background:#2d3039;"></div>
<div style="left:3.9px;top:3.5px;width:5px;height:5px;background:#fe5f57;border-radius:50%"></div>
<div style="left:11.5px;top:3.5px;width:5px;height:5px;background:#4d505a;border-radius:50%"></div>
<div style="left:19.1px;top:3.5px;width:5px;height:5px;background:#28c840;border-radius:50%"></div>
<span class="t" style="left:71px;top:2.00px;color:#d4d7dd;font-size:5.05px;font-weight:400;transform:translateX(-50%);">Schema Editor</span>
<span class="t" style="left:3px;top:13.30px;color:#e0e2e7;font-size:5.5px;font-weight:400;">Query Params for layout68</span>
<svg style="left:5.70px;top:26.50px;" width="6" height="6" viewBox="0 0 6 6"><path d="M3 .4v5.200M.4 3h5.200" stroke="#454852" stroke-width=".6"/></svg>
<svg style="left:19.50px;top:27.00px;" width="5" height="5" viewBox="0 0 5 5"><path d="M.5.500l4 4M4.500.5l-4 4" stroke="#454852" stroke-width=".6"/></svg>
<div style="left:29.5px;top:24.2px;width:69px;height:10.6px;background:#2d3039;border-radius:1px"></div>
<span class="t" style="left:33px;top:25.20px;color:#6e727c;font-size:5.6px;font-weight:400;">Search</span>
<svg style="left:102.70px;top:25.70px;" width="7.4" height="7.4" viewBox="0 0 7.4 7.4"><rect x=".5" y=".5" width="6.400" height="6.400" rx="1" fill="none" stroke="#b4b8c0" stroke-width=".65"/><path d="M1.300 3.700h4.800" fill="none" stroke="#b4b8c0" stroke-width=".65"/></svg>
<svg style="left:115.70px;top:25.70px;" width="7.4" height="7.4" viewBox="0 0 7.4 7.4"><rect x=".5" y=".5" width="6.400" height="6.400" rx="1" fill="none" stroke="#b4b8c0" stroke-width=".65"/><path d="M1.300 3.700h4.800M3.700 1.300v4.800" fill="none" stroke="#b4b8c0" stroke-width=".65"/></svg>
<svg style="left:128.90px;top:25.60px;" width="7" height="7.6" viewBox="0 0 7 7.6"><path d="M.4 1.600h6.200M2.400 1.500V.5h2.200v1M1.100 1.700l.3 5.400h4.200l.3-5.400" fill="none" stroke="#b4b8c0" stroke-width=".65"/></svg>
<svg style="left:4.50px;top:41.90px;" width="5" height="3.4" viewBox="0 0 5 3.4"><path d="M.8.800L2.500 2.500 4.200.8" fill="none" stroke="#c9ccd3" stroke-width=".85"/></svg>
<svg style="left:12.80px;top:39.90px;" width="7.4" height="7.4" viewBox="0 0 7.4 7.4"><circle cx="3.700" cy="3.700" r="3.200" fill="none" stroke="#b4b8c0" stroke-width=".65"/><path d="M1.300 2.300l2.400 1.300 2.400-1.300M3.700 3.600v3" fill="none" stroke="#b4b8c0" stroke-width=".6"/></svg>
<span class="t" style="left:22.6px;top:39.20px;color:#e0e2e7;font-size:5.14px;font-weight:400;">sessionStorage</span>
<svg style="left:18.20px;top:50.50px;" width="6" height="6.4" viewBox="0 0 6 6.4"><path d="M.6 6L3 .5 5.400 6M1.500 4.200h3" fill="none" stroke="#b4b8c0" stroke-width=".65"/></svg>
<span class="t" style="left:27px;top:49.40px;color:#e0e2e7;font-size:5.07px;font-weight:400;">test12</span>
<span class="t" style="left:3.2px;top:144.20px;color:#d4d7dd;font-size:5.5px;font-weight:400;">Properties</span>
<div style="left:38px;top:224.8px;width:29.400px;height:9.300px;border:.7px solid #9da1ab;border-radius:4.700px;box-sizing:border-box"></div>
<span class="t" style="left:52.7px;top:225.50px;color:#e0e2e7;font-size:4.9px;font-weight:700;transform:translateX(-50%);">Cancel</span>
<div style="left:72.30000000000001px;top:224.8px;width:29.700px;height:9.300px;border:.7px solid #4294f0;border-radius:4.700px;box-sizing:border-box"></div>
<span class="t" style="left:87.1px;top:225.50px;color:#4294f0;font-size:4.9px;font-weight:700;transform:translateX(-50%);">Save</span>
</div>
</body></html>
